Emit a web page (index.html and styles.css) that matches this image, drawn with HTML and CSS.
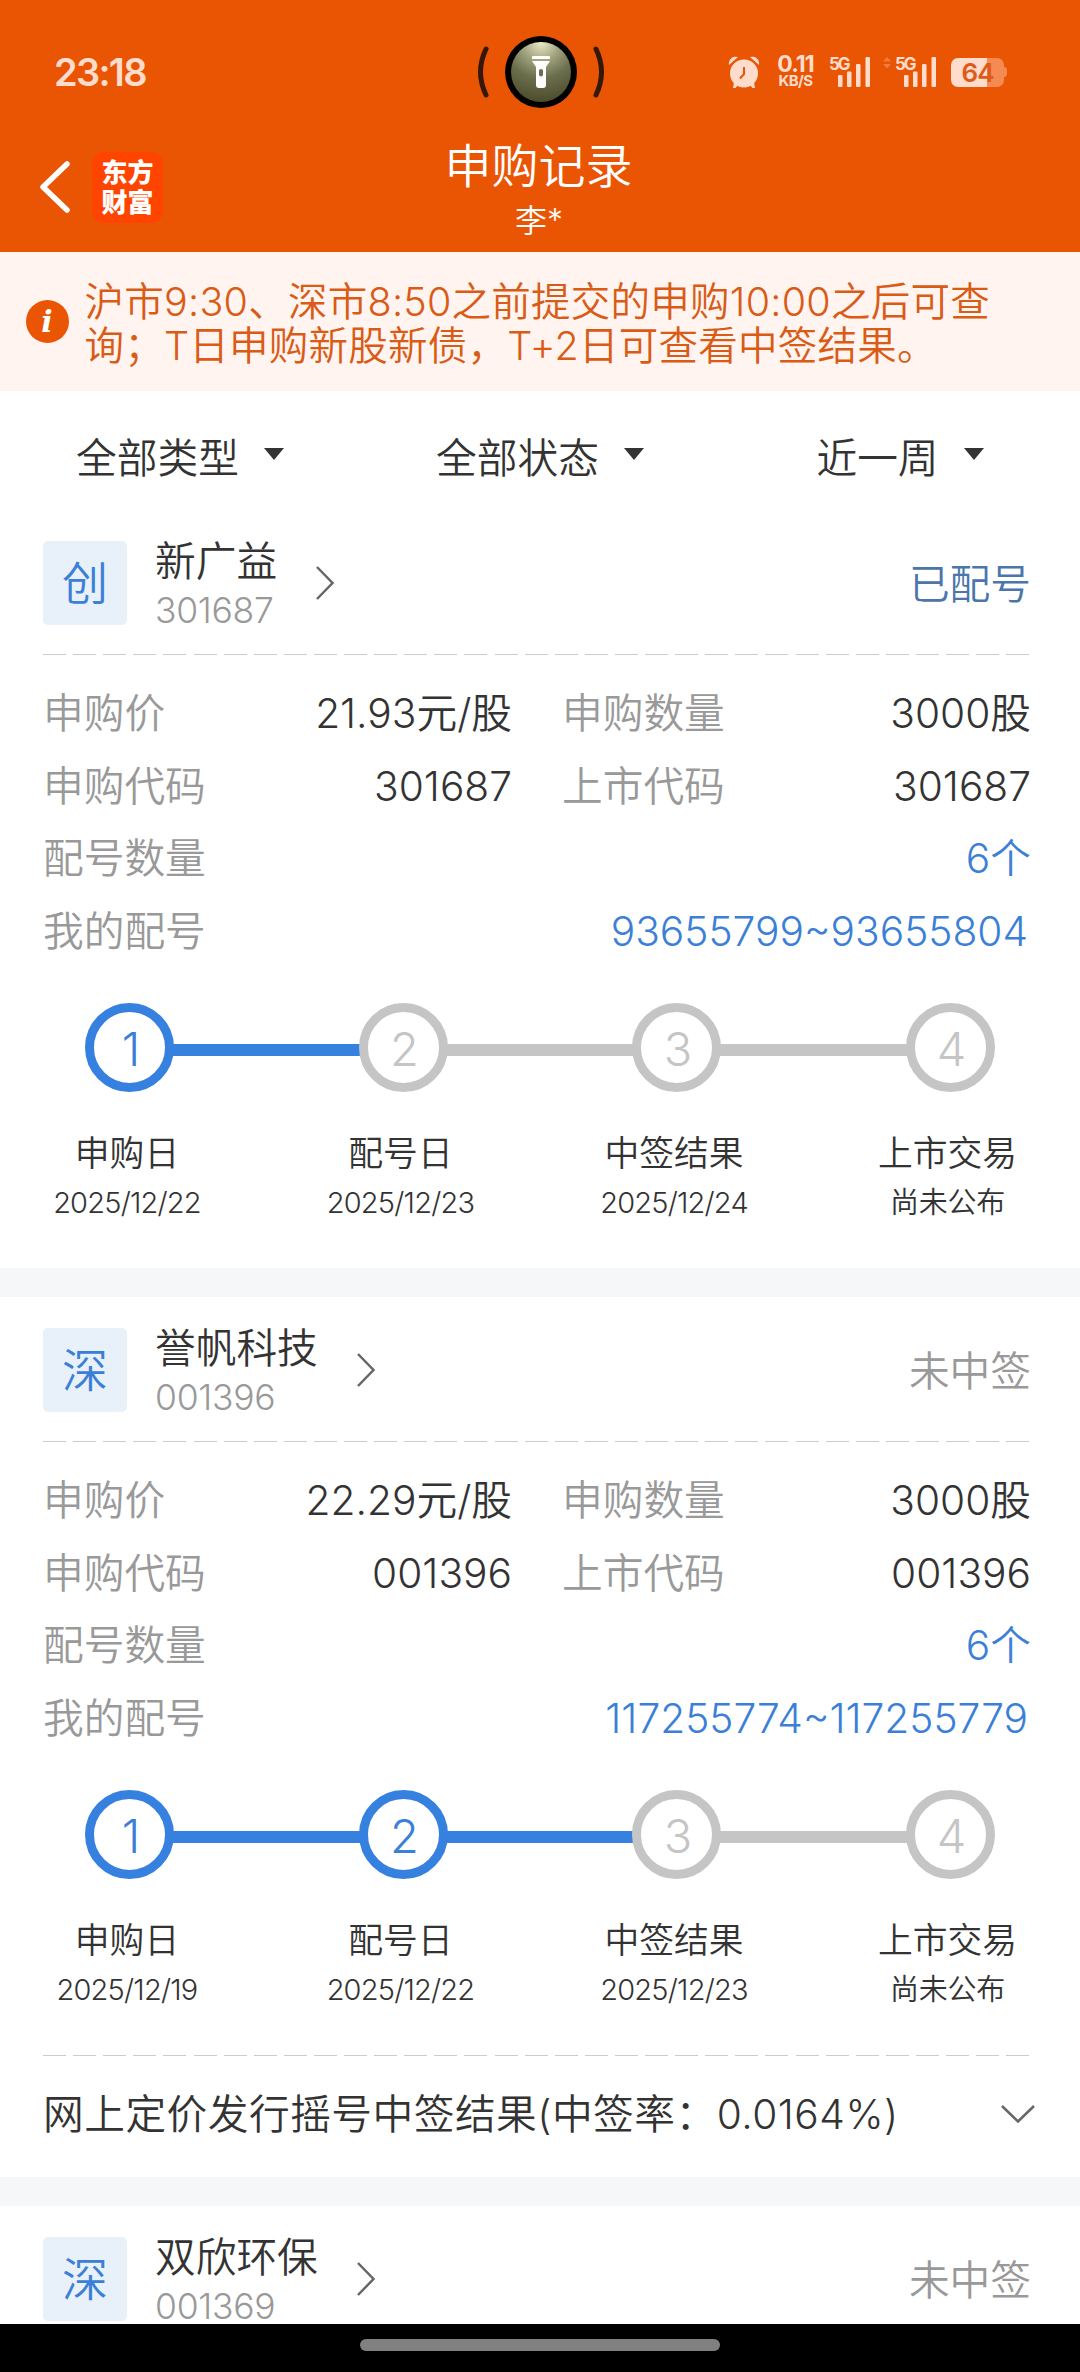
FILE: index.html
```
<!DOCTYPE html>
<html lang="zh-CN">
  <head>
    <meta charset="UTF-8" />
    <meta name="viewport" content="width=device-width, initial-scale=1.0" />
    <title>申购记录</title>
    <link rel="stylesheet" href="styles.css">
  </head>
  <body>
    <div class="header">
      <div class="status-bar">
        <span class="time">23:18</span>
        <svg class="torch" width="128" height="72" viewBox="0 0 128 72">
          <defs>
            <radialGradient id="glow" cx="50%" cy="0%" r="100%">
              <stop offset="0" stop-color="#eeefc8" />
              <stop offset="0.3" stop-color="#a3a681" />
              <stop offset="0.6" stop-color="#6c6f4d" />
              <stop offset="1" stop-color="#4b4c2c" />
            </radialGradient>
          </defs>
          <path d="M9 13 Q-2 36 9 59 M119 13 Q130 36 119 59" fill="none" stroke="#35180a" stroke-width="5" stroke-linecap="round" />
          <circle cx="64" cy="36" r="36" fill="#000" />
          <circle cx="64" cy="36" r="30" fill="url(#glow)" />
          <path d="M56 20h16a1 1 0 0 1 1 1v2H55v-2a1 1 0 0 1 1-1zM55 25h18l-4 6v18a3 3 0 0 1-3 3h-4a3 3 0 0 1-3-3V31z" fill="#fff" />
          <rect x="62" y="33" width="4" height="7.500" rx="2" fill="#6c6f4d" />
        </svg>
        <div class="status-icons">
          <svg class="alarm" width="32" height="32" viewBox="0 0 32 32">
            <circle cx="16" cy="17.500" r="14" />
            <path d="M1 9a7 7 0 0 1 9-8zM31 9a7 7 0 0 0-9-8zM6 26l4 3-2.500 3H5zM26 26l-4 3 2.500 3H27z" />
            <path d="M16 11v7l-4 4.500" fill="none" stroke="#ea5503" stroke-width="2" />
          </svg>
          <div class="speed">
            <b>0.11</b>
            <span>KB/S</span>
          </div>
          <svg class="signal" width="42" height="32" viewBox="0 0 42 32">
            <text x="0" y="14">5G</text>
            <rect x="9" y="19" width="4.500" height="12" rx="1" />
            <rect x="18" y="15.500" width="4.500" height="15.500" rx="1" />
            <rect x="27" y="8" width="4.500" height="23" rx="1" />
            <rect x="36.500" y="1" width="4.500" height="30" rx="1" />
          </svg>
          <svg class="signal second" width="54" height="32" viewBox="-12 0 54 32">
            <path d="M-12 5.500l4-4.500 4 4.500zM-12 8l4 4.500 4-4.500z" opacity="0.3" />
            <text x="0" y="14">5G</text>
            <rect x="9" y="19" width="4.500" height="12" rx="1" />
            <rect x="18" y="15.500" width="4.500" height="15.500" rx="1" />
            <rect x="27" y="8" width="4.500" height="23" rx="1" />
            <rect x="36.500" y="1" width="4.500" height="30" rx="1" />
          </svg>
          <div class="battery">64</div>
          <div class="battery-tip"></div>
        </div>
      </div>
      <div class="nav">
        <div class="nav-left">
          <svg class="back" width="31" height="52" viewBox="0 0 31 52">
            <path d="M28 3L4 26l24 23" fill="none" stroke="#fff" stroke-width="5.500" stroke-linecap="round" stroke-linejoin="round" />
          </svg>
          <div class="logo">东方<br />财富</div>
        </div>
        <div class="title">
          <h1>申购记录</h1>
          <p>李*</p>
        </div>
      </div>
    </div>

    <div class="notice">
      <div class="info">i</div>
      <p>沪市9:30、深市8:50之前提交的申购10:00之后可查<br />询；T日申购新股新债，T+2日可查看中签结果。</p>
    </div>

    <div class="filters">
      <div class="filter">全部类型<i class="caret"></i></div>
      <div class="filter">全部状态<i class="caret"></i></div>
      <div class="filter">近一周<i class="caret"></i></div>
    </div>

    <div class="list">
      <div class="card">
        <div class="card-head">
          <div class="badge">创</div>
          <div class="stock">
            <h2>新广益</h2>
            <span>301687</span>
          </div>
          <svg class="arrow" width="20" height="34" viewBox="0 0 20 34">
            <path d="M2 1l15.500 16L2 33" />
          </svg>
          <div class="status allotted">已配号</div>
        </div>
        <div class="dashed"></div>
        <div class="rows">
          <div class="row">
            <div class="cell"><label>申购价</label><span>21.93元/股</span></div>
            <div class="cell"><label>申购数量</label><span>3000股</span></div>
          </div>
          <div class="row">
            <div class="cell"><label>申购代码</label><span>301687</span></div>
            <div class="cell"><label>上市代码</label><span>301687</span></div>
          </div>
          <div class="row">
            <div class="cell"><label>配号数量</label><span class="link">6个</span></div>
          </div>
          <div class="row">
            <div class="cell"><label>我的配号</label><span class="link numbers">93655799~93655804</span></div>
          </div>
        </div>
        <div class="steps">
          <div class="circle done">1</div>
          <div class="bar done"></div>
          <div class="circle">2</div>
          <div class="bar"></div>
          <div class="circle">3</div>
          <div class="bar"></div>
          <div class="circle">4</div>
        </div>
        <div class="step-labels">
          <div class="step-label"><b>申购日</b><span>2025/12/22</span></div>
          <div class="step-label"><b>配号日</b><span>2025/12/23</span></div>
          <div class="step-label"><b>中签结果</b><span>2025/12/24</span></div>
          <div class="step-label"><b>上市交易</b><span class="pending">尚未公布</span></div>
        </div>
      </div>

      <div class="card">
        <div class="card-head">
          <div class="badge">深</div>
          <div class="stock">
            <h2>誉帆科技</h2>
            <span>001396</span>
          </div>
          <svg class="arrow" width="20" height="34" viewBox="0 0 20 34">
            <path d="M2 1l15.500 16L2 33" />
          </svg>
          <div class="status">未中签</div>
        </div>
        <div class="dashed"></div>
        <div class="rows">
          <div class="row">
            <div class="cell"><label>申购价</label><span>22.29元/股</span></div>
            <div class="cell"><label>申购数量</label><span>3000股</span></div>
          </div>
          <div class="row">
            <div class="cell"><label>申购代码</label><span>001396</span></div>
            <div class="cell"><label>上市代码</label><span>001396</span></div>
          </div>
          <div class="row">
            <div class="cell"><label>配号数量</label><span class="link">6个</span></div>
          </div>
          <div class="row">
            <div class="cell"><label>我的配号</label><span class="link numbers">117255774~117255779</span></div>
          </div>
        </div>
        <div class="steps">
          <div class="circle done">1</div>
          <div class="bar done"></div>
          <div class="circle done">2</div>
          <div class="bar done"></div>
          <div class="circle">3</div>
          <div class="bar"></div>
          <div class="circle">4</div>
        </div>
        <div class="step-labels">
          <div class="step-label"><b>申购日</b><span>2025/12/19</span></div>
          <div class="step-label"><b>配号日</b><span>2025/12/22</span></div>
          <div class="step-label"><b>中签结果</b><span>2025/12/23</span></div>
          <div class="step-label"><b>上市交易</b><span class="pending">尚未公布</span></div>
        </div>
        <div class="dashed"></div>
        <div class="result">
          <span>网上定价发行摇号中签结果(中签率：0.0164%)</span>
          <svg class="arrow" width="34" height="20" viewBox="0 0 34 20">
            <path d="M1 2l16 15.500L33 2" />
          </svg>
        </div>
      </div>

      <div class="card">
        <div class="card-head">
          <div class="badge">深</div>
          <div class="stock">
            <h2>双欣环保</h2>
            <span>001369</span>
          </div>
          <svg class="arrow" width="20" height="34" viewBox="0 0 20 34">
            <path d="M2 1l15.500 16L2 33" />
          </svg>
          <div class="status">未中签</div>
        </div>
      </div>
    </div>

    <div class="home-bar"><div class="handle"></div></div>
  </body>
</html>
```

FILE: styles.css
```
* {
  margin: 0;
  padding: 0;
  box-sizing: border-box;
}

body {
  display: flex;
  flex-direction: column;
  width: 1080px;
  height: 2372px;
  overflow: hidden;
  background-color: #fff;
  color: #333;
  font-family: "Noto Sans CJK SC", sans-serif;
  font-size: 40.7px;
  font-weight: 350;
  white-space: nowrap;
}

h1,
h2,
b,
i {
  font-weight: inherit;
  font-style: normal;
}

/* Numbers use Inter, the Chinese text falls through */
.status-bar,
.title p,
.notice p,
.stock span,
.cell span,
.circle,
.step-label span,
.result {
  font-family: Inter, "Noto Sans CJK SC", sans-serif;
}

/* Header */
.header {
  flex: none;
  height: 252px;
  background-color: #ea5503;
  color: #fff;
}

.status-bar {
  display: grid;
  grid-template-columns: 1fr auto 1fr;
  align-items: center;
  height: 144px;
  padding: 0 73px 0 54px;
  color: #ffdccb;
}

.time {
  font-size: 38px;
  font-weight: 600;
  line-height: 40px;
  letter-spacing: -1.7px;
}

.torch {
  margin-left: 20px;
}

.status-icons {
  display: flex;
  align-items: center;
  justify-content: flex-end;
}

.alarm,
.signal {
  fill: #ffdccb;
}

.signal {
  overflow: visible;
}

.speed {
  display: flex;
  flex-direction: column;
  align-items: center;
  width: 38px;
  margin: 0 14px 0 17px;
  font-weight: 700;
}

.speed b {
  font-size: 23px;
  line-height: 17px;
  letter-spacing: -1px;
}

.speed span {
  font-size: 15px;
  line-height: 15px;
  letter-spacing: -0.6px;
}

.signal text {
  font-size: 17px;
  font-weight: 700;
  letter-spacing: -2px;
}

.second {
  margin-left: 12.5px;
}

.battery {
  width: 53px;
  height: 29px;
  margin-left: 14px;
  border-radius: 7px;
  background: linear-gradient(to right, #ffdccb 36px, #f58a52 36px);
  color: #dd5a17;
  font-size: 26px;
  font-weight: 600;
  line-height: 30px;
  letter-spacing: -1px;
  text-align: center;
}

.battery-tip {
  width: 3px;
  height: 10px;
  border-radius: 0 3px 3px 0;
  background-color: #f58a52;
}

.nav {
  display: grid;
  grid-template-columns: 1fr auto 1fr;
  height: 108px;
  padding: 0 39px;
}

.nav-left {
  display: flex;
  align-items: center;
  height: 86px;
}

.logo {
  width: 71px;
  height: 71px;
  margin-left: 22px;
  padding-top: 4px;
  border-radius: 12px;
  background-color: #ff4400;
  font-size: 26px;
  font-weight: 900;
  line-height: 30px;
  text-align: center;
}

.title {
  text-align: center;
}

.title h1 {
  font-size: 47px;
  line-height: 56px;
  margin: -9px 0 10px -3px;
}

.title p {
  font-size: 32px;
  line-height: 40px;
  margin-left: -2px;
}

/* Notice */
.notice {
  display: flex;
  align-items: center;
  flex: none;
  height: 138.5px;
  padding: 0 25.5px;
  background-color: #fff4ef;
  color: #d95b16;
  font-size: 39.5px;
  line-height: 44px;
}

.notice p {
  margin-left: 16px;
  padding-top: 6px;
  letter-spacing: 0.25px;
}

.info {
  width: 43px;
  height: 43px;
  border-radius: 50%;
  background-color: #ea5503;
  color: #fff;
  font-family: "DejaVu Serif", serif;
  font-size: 30px;
  font-style: italic;
  font-weight: 700;
  line-height: 43px;
  text-align: center;
}

/* Filters */
.filters {
  display: flex;
  flex: none;
  height: 119.5px;
}

.filter {
  display: flex;
  align-items: center;
  justify-content: center;
  flex: 1;
  padding-top: 10px;
}

.caret {
  margin: -2px 0 0 25px;
  border: 10px solid transparent;
  border-top: 12px solid #333;
  border-bottom: none;
}

/* Cards */
.list {
  flex: 1;
  min-height: 0;
  overflow: hidden;
}

.card {
  padding: 31px 49px 0 43px;
}

.card + .card {
  border-top: 29px solid #f6f7f9;
}

.card-head {
  display: flex;
  align-items: center;
  height: 84px;
  margin-bottom: 29px;
}

.badge {
  width: 84px;
  height: 84px;
  border-radius: 5px;
  background-color: #e8f1fa;
  color: #3b80d6;
  font-size: 46px;
  line-height: 79px;
  text-align: center;
}

.stock {
  margin: 0 38px 0 28px;
}

.stock h2 {
  font-size: 40.7px;
  line-height: 48px;
}

.stock span {
  display: block;
  margin-top: 8px;
  color: #999;
  font-size: 35.5px;
  line-height: 40px;
  letter-spacing: -0.3px;
}

.arrow {
  fill: none;
  stroke: #666;
  stroke-width: 2.5;
}

.status {
  margin: -3px 0 0 auto;
  color: #999;
}

.allotted {
  color: #4b76ab;
}

.dashed {
  width: 987px;
  height: 1px;
  background: repeating-linear-gradient(to right, #ccc 0 23px, transparent 23px 30.1px);
}

.rows {
  padding-top: 20px;
}

.row {
  display: flex;
  justify-content: space-between;
  gap: 50px;
  height: 72.5px;
  line-height: 72.5px;
}

.cell {
  display: flex;
  align-items: baseline;
  flex: 1;
  justify-content: space-between;
}

.cell label {
  color: #999;
}

.cell .link {
  color: #3b80d6;
}

.cell .numbers {
  margin-right: 3px;
}

/* Progress */
.steps {
  display: flex;
  align-items: center;
  margin: 38px 36.5px 0 42px;
}

.circle {
  width: 89px;
  height: 89px;
  border: 9px solid #c5c5c5;
  border-radius: 50%;
  color: #c5c5c5;
  font-size: 47px;
  line-height: 74px;
  text-align: center;
  text-indent: 3px;
}

.circle.done {
  border-color: #3681e0;
  color: #3b80d6;
}

.bar {
  flex: 1;
  height: 12px;
  margin: 4px -1px 0;
  background-color: #c5c5c5;
}

.bar.done {
  background-color: #3681e0;
}

.step-labels {
  display: flex;
  justify-content: space-between;
  margin: 36px 3.5px 45px 4px;
}

.step-label {
  width: 160px;
  text-align: center;
}

.step-label b {
  display: block;
  font-size: 34.8px;
  line-height: 46px;
}

.step-label span {
  display: block;
  margin-top: 9px;
  font-size: 29px;
  line-height: 40px;
  letter-spacing: -0.8px;
}

.step-label .pending {
  letter-spacing: -0.2px;
}

.result {
  display: flex;
  align-items: center;
  justify-content: space-between;
  height: 121px;
  margin-right: -4px;
  padding-bottom: 11px;
  letter-spacing: 0.5px;
}

.result .arrow {
  margin-top: 6px;
}

/* Bottom bar */
.home-bar {
  flex: none;
  height: 48px;
  padding-top: 15px;
  background-color: #000;
}

.handle {
  width: 360px;
  height: 12px;
  margin: 0 auto;
  border-radius: 6px;
  background-color: #808080;
}
```
